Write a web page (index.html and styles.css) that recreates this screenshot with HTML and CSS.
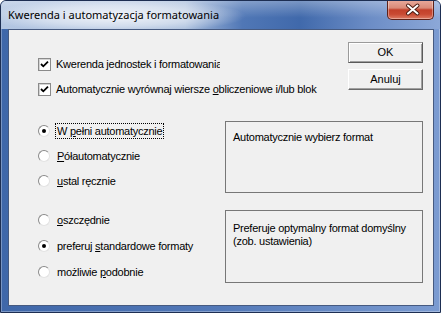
FILE: index.html
```html
<!DOCTYPE html>
<html lang="pl">
<head>
    <meta charset="UTF-8">
    <title>Kwerenda i automatyzacja formatowania</title>
    <link rel="stylesheet" href="styles.css">
</head>

<body>
    <div class="window">
        <div class="titlebar">
            <span class="title">Kwerenda i automatyzacja formatowania</span>
            <div class="close">
                <svg width="47" height="19" viewBox="0 0 47 19">
                    <path d="M20 5.5 L29.5 13.5 M29.5 5.5 L20 13.5" stroke="#4b1b12" stroke-width="4" stroke-linecap="round"/>
                    <path d="M20 5.5 L29.5 13.5 M29.5 5.5 L20 13.5" stroke="#fff" stroke-width="2" stroke-linecap="round"/>
                </svg>
            </div>
        </div>

        <div class="client">
            <div class="top">
                <div class="checks">
                    <div class="row">
                        <span class="checkbox"><svg width="11" height="11" viewBox="0 0 11 11"><path d="M2 5 L4.3 7.3 L9 2.6" fill="none" stroke="#000" stroke-width="1.8"/></svg></span>
                        <span class="label clip">Kwerenda jednostek i formatowania</span>
                    </div>
                    <div class="row">
                        <span class="checkbox"><svg width="11" height="11" viewBox="0 0 11 11"><path d="M2 5 L4.3 7.3 L9 2.6" fill="none" stroke="#000" stroke-width="1.8"/></svg></span>
                        <span class="label">Automatycznie wyrównaj wiersze <u>o</u>bliczeniowe i/lub blok</span>
                    </div>
                </div>
                <div class="buttons">
                    <div class="btn default">OK</div>
                    <div class="btn">Anuluj</div>
                </div>
            </div>

            <div class="group first">
                <div class="radios">
                    <div class="row">
                        <span class="radio checked"></span>
                        <span class="label focus">W <u>p</u>ełni automatycznie</span>
                    </div>
                    <div class="row">
                        <span class="radio"></span>
                        <span class="label"><u>P</u>ółautomatycznie</span>
                    </div>
                    <div class="row">
                        <span class="radio"></span>
                        <span class="label"><u>u</u>stal ręcznie</span>
                    </div>
                </div>
                <div class="desc">Automatycznie wybierz format</div>
            </div>

            <div class="group second">
                <div class="radios">
                    <div class="row">
                        <span class="radio"></span>
                        <span class="label"><u>o</u>szczędnie</span>
                    </div>
                    <div class="row">
                        <span class="radio checked"></span>
                        <span class="label">preferuj <u>s</u>tandardowe formaty</span>
                    </div>
                    <div class="row">
                        <span class="radio"></span>
                        <span class="label">możliwie <u>p</u>odobnie</span>
                    </div>
                </div>
                <div class="desc">Preferuje optymalny format domyślny<br>(zob. ustawienia)</div>
            </div>
        </div>
    </div>
</body>

</html>
```

FILE: styles.css
```css
html,
body {
    margin: 0;
    padding: 0;
    background: #fff;
}

.window {
    width: 441px;
    height: 313px;
    box-sizing: border-box;
    border: 1px solid #1d2e52;
    border-radius: 6px 6px 0 0;
    padding: 0 6px 6px 7px;
    display: flex;
    flex-direction: column;
    background: linear-gradient(to right, #3f67a9, #5379b8 50%, #7b9bd1);
    box-shadow: inset 0 0 0 1px rgba(255, 255, 255, .3);
    overflow: hidden;
}

/* title bar */
.titlebar {
    height: 28px;
    margin: 0 -6px 0 -7px;
    padding-left: 7px;
    display: flex;
    align-items: flex-start;
    background:
        radial-gradient(ellipse 130px 17px at 115px 15px, rgba(255, 255, 255, .85), rgba(255, 255, 255, .45) 60%, rgba(255, 255, 255, 0)),
        linear-gradient(to bottom, rgba(255, 255, 255, .3), rgba(255, 255, 255, 0) 60%),
        linear-gradient(to right, #b3c6e2 0%, #a8bddc 42%, #5077b6 55%, #4069ab 68%, #6c8dc6 84%, #8ca8d8 100%);
}

.title {
    margin-top: 6px;
    font-family: "Noto Sans", "Liberation Sans", sans-serif;
    font-size: 11px;
    line-height: 16px;
    color: #000;
}

.close {
    margin-left: auto;
    margin-right: 6px;
    margin-top: -1px;
    width: 47px;
    height: 20px;
    box-sizing: border-box;
    border: 1px solid #5e2118;
    border-top: none;
    border-radius: 0 0 5px 5px;
    background: linear-gradient(to bottom, #e9ab9d 0%, #d98a78 42%, #c3402a 52%, #c94a33 75%, #de7b64 100%);
    box-shadow: inset 0 0 0 1px rgba(255, 255, 255, .35);
}

.close svg {
    display: block;
}

/* client area */
.client {
    flex: 1;
    border: 1px solid #465a80;
    background: #f0f0f0;
    padding: 12px 10px 0 29px;
    font-family: "Liberation Sans", Arial, sans-serif;
    font-size: 11px;
    letter-spacing: -0.25px;
    color: #000;
}

.top {
    display: flex;
    justify-content: space-between;
    align-items: flex-start;
}

.checks {
    margin-top: 14px;
    display: flex;
    flex-direction: column;
    gap: 9px;
}

.row {
    height: 16px;
    display: flex;
    align-items: center;
}

.checkbox {
    width: 13px;
    height: 13px;
    box-sizing: border-box;
    border: 1px solid #8a8a8a;
    background: #fff;
    box-shadow: inset 1px 1px #d4d4d4;
    margin-right: 5px;
}

.checkbox svg {
    display: block;
}

.label {
    line-height: 14px;
    white-space: nowrap;
}

.label u {
    text-decoration: underline;
}

.clip {
    max-width: 164px;
    overflow: hidden;
}

.buttons {
    display: flex;
    flex-direction: column;
    gap: 6px;
}

.btn {
    width: 75px;
    height: 21px;
    box-sizing: border-box;
    border: 1px solid;
    border-color: #fff #6a6a6a #6a6a6a #fff;
    box-shadow: inset -1px -1px #a0a0a0, 0 0 0 0 #000;
    background: #f0f0f0;
    text-align: center;
    line-height: 19px;
    letter-spacing: 0;
}

.btn.default {
    border-color: #9a9a9a #5a5a5a #5a5a5a #9a9a9a;
    box-shadow: inset 1px 1px #fff, inset -1px -1px #a0a0a0;
}

/* option groups */
.group {
    display: flex;
    justify-content: space-between;
    align-items: flex-start;
}

.group.first {
    margin-top: 24px;
}

.group.second {
    margin-top: 17px;
}

.radios {
    padding-top: 2px;
    display: flex;
    flex-direction: column;
    gap: 9px;
}

.second .radios {
    gap: 10px;
}

.radio {
    width: 12px;
    height: 12px;
    box-sizing: border-box;
    border-radius: 50%;
    border: 1px solid;
    border-color: #8a8a8a #e2e2e2 #e2e2e2 #8a8a8a;
    background: #fff;
    margin-right: 5px;
    display: flex;
    align-items: center;
    justify-content: center;
}

.radio.checked::after {
    content: "";
    width: 4px;
    height: 4px;
    border-radius: 50%;
    background: #000;
}

.radios .label {
    border: 1px dotted transparent;
    padding: 0 1px;
}

.radios .label.focus {
    border-color: #000;
}

.desc {
    width: 198px;
    height: 72px;
    box-sizing: border-box;
    border: 1px solid #777;
    padding: 9px 7px 0;
    line-height: 13px;
}

.second .desc {
    height: 73px;
    padding-top: 11px;
}
```
